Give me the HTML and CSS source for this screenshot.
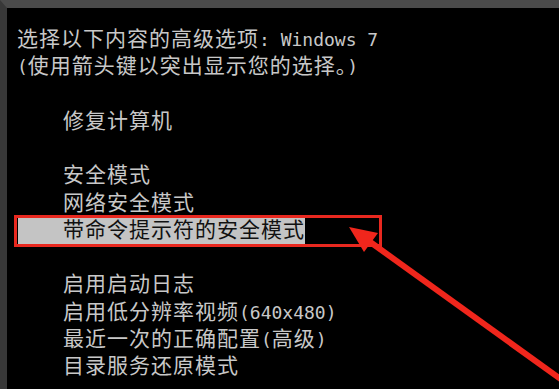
FILE: index.html
```html
<!DOCTYPE html>
<html lang="zh-CN">
<head>
<meta charset="utf-8">
<title>高级启动选项</title>
<link rel="stylesheet" href="styles.css">
</head>
<body>
<div class="screen">
  <div class="frame">
    <div class="line">选择以下内容的高级选项<span class="lat">: Windows 7</span></div>
    <div class="line"><span class="lat">(</span>使用箭头键以突出显示您的选择。<span class="lat">)</span></div>
    <div class="line"></div>
    <div class="line item">修复计算机</div>
    <div class="line"></div>
    <div class="line item">安全模式</div>
    <div class="line item">网络安全模式</div>
    <div class="line"><span class="hl">带命令提示符的安全模式</span></div>
    <div class="line"></div>
    <div class="line item">启用启动日志</div>
    <div class="line item">启用低分辨率视频<span class="lat">(640x480)</span></div>
    <div class="line item">最近一次的正确配置<span class="lat">(</span>高级<span class="lat">)</span></div>
    <div class="line item">目录服务还原模式</div>
  </div>
  <svg class="annot" width="559" height="389" viewBox="0 0 559 389" aria-hidden="true">
    <rect x="15.5" y="216.5" width="365" height="29" fill="none" stroke="#e8281f" stroke-width="3"/>
    <line x1="366" y1="239" x2="580" y2="393" stroke="#f0261c" stroke-width="6"/>
    <polygon points="349,227 364,252 378,233" fill="#f0261c"/>
  </svg>
</div>
</body>
</html>
```
FILE: styles.css
```css
html, body {
  margin: 0;
  padding: 0;
  background: #000;
}
.screen {
  position: relative;
  width: 559px;
  height: 389px;
  overflow: hidden;
  background: #000;
}
.frame {
  box-sizing: border-box;
  height: 389px;
  border-top: 8px solid #4b4b4b;
  border-left: 7px solid #383838;
  padding: 18px 0 0 10px;
  color: #c8c8c8;
  font-family: "DejaVu Sans Mono", "Noto Sans CJK SC", monospace;
  font-size: 21px;
  letter-spacing: 1px;
}
.line {
  height: 27.25px;
  line-height: 27.25px;
  white-space: pre;
}
.lat {
  font-size: 18px;
  letter-spacing: 0;
}
.item {
  padding-left: 46px;
}
.hl {
  display: inline-block;
  height: 27px;
  margin-left: 1px;
  padding-left: 45px;
  background: #c4c4c4;
  color: #111;
}
.annot {
  position: absolute;
  left: 0;
  top: 0;
  pointer-events: none;
}
```
